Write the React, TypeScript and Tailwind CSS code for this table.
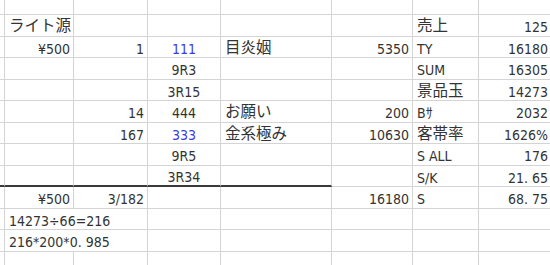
import React from "react";

type Cell = { t?: string; a?: "l" | "r" | "c"; blue?: boolean; jp?: boolean; span?: number };

const colW = [4, 69, 74, 73, 111, 81, 66, 73];
const rowH = [15, 22, 21, 22, 21, 22, 21, 22, 21, 22, 21, 22, 14];

// each row: cells for columns 1..7 (col 0 is the narrow left edge)
const rows: Cell[][] = [
  [{}, {}, {}, {}, {}, {}, {}],
  [{ t: "ライト源", a: "l", jp: true }, {}, {}, {}, {}, { t: "売上", a: "l", jp: true }, { t: "125", a: "r" }],
  [
    { t: "¥500", a: "r" },
    { t: "1", a: "r" },
    { t: "111", a: "c", blue: true },
    { t: "目炎姻", a: "l", jp: true },
    { t: "5350", a: "r" },
    { t: "TY", a: "l" },
    { t: "16180", a: "r" },
  ],
  [{}, {}, { t: "9R3", a: "c" }, {}, {}, { t: "SUM", a: "l" }, { t: "16305", a: "r" }],
  [{}, {}, { t: "3R15", a: "c" }, {}, {}, { t: "景品玉", a: "l", jp: true }, { t: "14273", a: "r" }],
  [
    {},
    { t: "14", a: "r" },
    { t: "444", a: "c" },
    { t: "お願い", a: "l", jp: true },
    { t: "200", a: "r" },
    { t: "Bｻ", a: "l" },
    { t: "2032", a: "r" },
  ],
  [
    {},
    { t: "167", a: "r" },
    { t: "333", a: "c", blue: true },
    { t: "金系極み", a: "l", jp: true },
    { t: "10630", a: "r" },
    { t: "客帯率", a: "l", jp: true },
    { t: "1626%", a: "r" },
  ],
  [{}, {}, { t: "9R5", a: "c" }, {}, {}, { t: "S ALL", a: "l" }, { t: "176", a: "r" }],
  [{}, {}, { t: "3R34", a: "c" }, {}, {}, { t: "S/K", a: "l" }, { t: "21. 65", a: "r" }],
  [
    { t: "¥500", a: "r" },
    { t: "3/182", a: "r" },
    {},
    {},
    { t: "16180", a: "r" },
    { t: "S", a: "l" },
    { t: "68. 75", a: "r" },
  ],
  [{ t: "14273÷66=216", a: "l", span: 2 }, {}, {}, {}, {}, {}],
  [{ t: "216*200*0. 985", a: "l", span: 2 }, {}, {}, {}, {}, {}],
  [{}, {}, {}, {}, {}, {}, {}],
];

function SheetCell({ c, w, h, thick }: { c: Cell; w: number; h: number; thick: boolean }) {
  const align =
    c.a === "r" ? "justify-end pr-[3px]" : c.a === "c" ? "justify-center" : "justify-start pl-[4px]";
  return (
    <div
      className={`flex items-center shrink-0 overflow-visible whitespace-nowrap border-r border-[#d4d4d4] ${
        thick ? "border-b-2 border-b-[#3a3a3a]" : "border-b border-b-[#d4d4d4]"
      } ${align}`}
      style={{ width: w, height: h }}
    >
      {c.t && (
        <span
          className={`leading-none pt-[3px] ${c.blue ? "text-[#3b3be6]" : "text-[#333333]"} ${
            c.jp ? "text-[15.5px]" : "text-[14px]"
          }`}
        >
          {c.t}
        </span>
      )}
    </div>
  );
}

export default function App() {
  return (
    <div
      className="w-[550px] h-[265px] overflow-hidden bg-white"
      style={{ fontFamily: "'DejaVu Sans Condensed', 'Liberation Sans', 'Noto Sans CJK JP', sans-serif" }}
    >
      {rows.map((r, ri) => {
        let col = 1;
        return (
          <div key={ri} className="flex">
            <SheetCell c={{}} w={colW[0]} h={rowH[ri]} thick={ri === 8} />
            {r.map((c, ci) => {
              const span = c.span ?? 1;
              const w = colW.slice(col, col + span).reduce((s, v) => s + v, 0);
              const thick = ri === 8 && col <= 4;
              col += span;
              return <SheetCell key={ci} c={c} w={w} h={rowH[ri]} thick={thick} />;
            })}
          </div>
        );
      })}
    </div>
  );
}
